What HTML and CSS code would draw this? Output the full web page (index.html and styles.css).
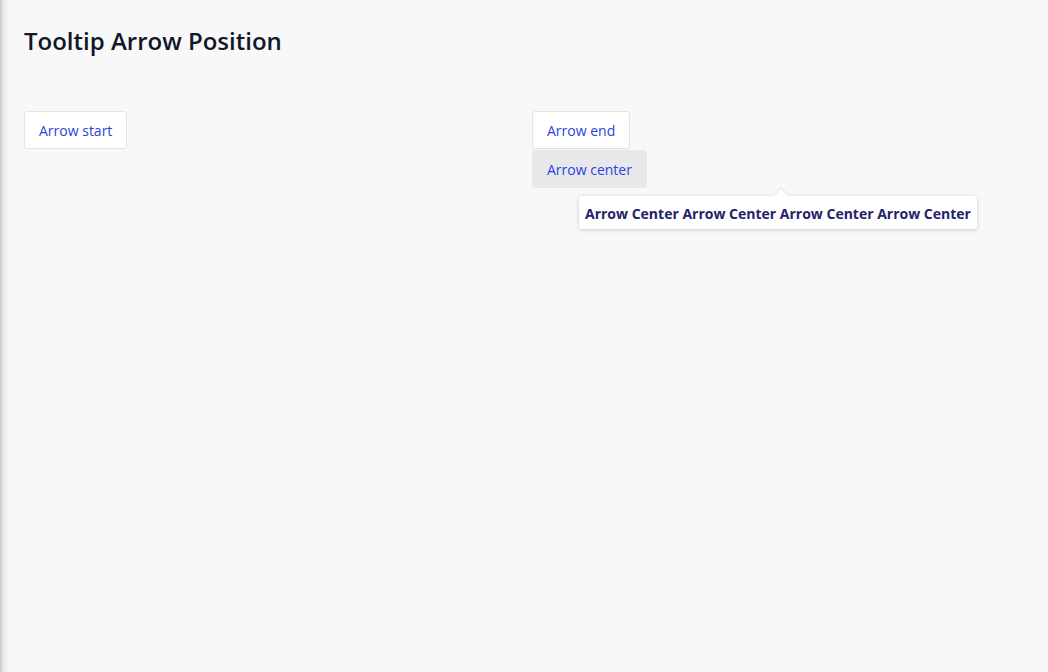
FILE: index.html
```html
<!DOCTYPE html>
<html lang="en">
<head>
<meta charset="utf-8">
<title>Tooltip Arrow Position</title>
<link rel="stylesheet" href="styles.css">
</head>
<body>
<main class="page">
  <h1 class="title">Tooltip Arrow Position</h1>
  <div class="grid">
    <div class="col">
      <button class="btn">Arrow start</button>
    </div>
    <div class="col">
      <button class="btn">Arrow end</button>
      <div class="anchor">
        <button class="btn btn-active">Arrow center</button>
        <div class="tooltip"><span class="tooltip-text">Arrow Center Arrow Center Arrow Center Arrow Center</span></div>
      </div>
    </div>
  </div>
</main>
</body>
</html>
```
FILE: styles.css
```css
html {
  height: 100%;
  background: #f8f8f8;
}
body {
  margin: 0;
  min-height: 100%;
  font-family: "Open Sans", "Noto Sans", sans-serif;
  color: #0f1729;
  background: linear-gradient(to right, #c4c4c4 0, #e6e6e6 3px, #f8f8f8 9px) #f8f8f8;
}
.page {
  padding: 24px 24px;
  min-height: 600px;
}
.title {
  margin: 0;
  font-size: 24px;
  font-weight: 600;
  line-height: 34px;
  color: #0f1729;
  height: 34px;
}
.grid {
  display: grid;
  grid-template-columns: 1fr 1fr;
  column-gap: 16px;
  margin-top: 53px;
}
.col {
  display: flex;
  flex-direction: column;
  align-items: flex-start;
  gap: 1px;
}
.btn {
  height: 38px;
  padding: 2px 14px 0;
  border: 1px solid #e4e4e7;
  border-radius: 3px;
  background: #ffffff;
  color: #2a43e0;
  font-family: "Open Sans", "Noto Sans", sans-serif;
  font-size: 14px;
  line-height: 20px;
  cursor: pointer;
}
.btn-active {
  background: #e8e8eb;
  border-color: #e8e8eb;
}
.anchor {
  position: relative;
}
.tooltip {
  position: absolute;
  left: 47px;
  top: 46px;
  white-space: nowrap;
  background: #ffffff;
  border-radius: 3px;
  box-shadow: 0 1px 4px rgba(0, 0, 0, 0.18);
  padding: 2px 6px 0;
  height: 31px;
  line-height: 32px;
  font-size: 14px;
  font-weight: 700;
  color: #23236b;
}
.tooltip-text {
  position: relative;
  z-index: 2;
}
.tooltip::before {
  content: "";
  position: absolute;
  left: 50%;
  top: -5px;
  width: 10px;
  height: 10px;
  margin-left: -2px;
  background: #ffffff;
  transform: rotate(45deg);
  box-shadow: -1px -1px 2px rgba(0, 0, 0, 0.08);
  z-index: 0;
}
.tooltip::after {
  content: "";
  position: absolute;
  left: 50%;
  top: 0;
  width: 24px;
  height: 8px;
  margin-left: -9px;
  background: #ffffff;
  z-index: 1;
}
```
